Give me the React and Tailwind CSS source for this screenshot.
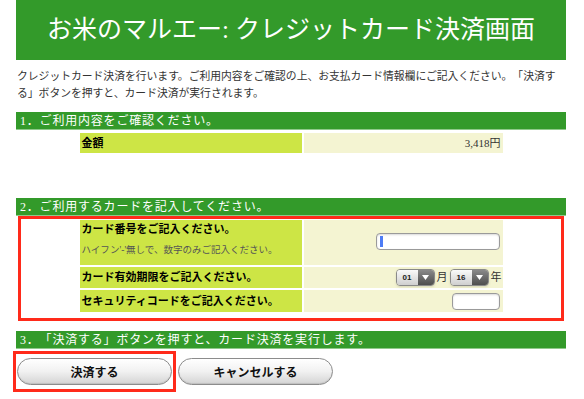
import React from 'react';

const serif = { fontFamily: '"Liberation Serif", "Noto Sans CJK JP", serif' };

const SectionBar = ({ children }) => (
  <div className="h-[18px] bg-[#339a2a] px-[4px] text-[12px] leading-[18px] text-white tracking-[0.8px] border-b border-[#8fc98a] [text-spacing-trim:space-all]">
    {children}
  </div>
);

const Select = ({ value }) => (
  <div className="flex h-[17px] items-stretch overflow-hidden rounded-[4px] border border-[#8a8a8a] shadow-sm">
    <div className="flex w-[21px] items-center justify-center bg-gradient-to-b from-[#fafafa] to-[#cfcfcf] text-[8px] font-bold text-[#222]" style={{ fontFamily: '"Liberation Sans", sans-serif' }}>
      {value}
    </div>
    <div className="flex w-[16px] items-center justify-center bg-gradient-to-b from-[#8a8a8a] to-[#4e4e4e]">
      <svg width="7" height="5" viewBox="0 0 7 5"><path d="M0 0h7L3.5 5z" fill="#fff" /></svg>
    </div>
  </div>
);

const Button = ({ children }) => (
  <button className="h-[27px] w-[155px] rounded-full border border-[#8c8c8c] bg-gradient-to-b from-white via-[#f1f1f1] to-[#d4d4d4] text-[12px] font-bold text-[#111] shadow-[inset_0_-1px_1px_rgba(0,0,0,0.1)]" style={{ fontFamily: '"Noto Sans CJK JP", sans-serif' }}>
    {children}
  </button>
);

export default function App() {
  return (
    <div className="h-[399px] w-[584px] overflow-hidden bg-white text-[#222]" style={serif}>
      <div className="mx-[16px] w-[550px]">
        <div className="flex h-[60px] items-center justify-center bg-[#339a2a] text-[25px] text-white">
          お米のマルエー: クレジットカード決済画面
        </div>

        <p className="mt-[8px] pl-[1px] text-[10.8px] leading-[17px] text-[#333] [text-spacing-trim:space-all]">
          クレジットカード決済を行います。ご利用内容をご確認の上、お支払カード情報欄にご記入ください。「決済する」ボタンを押すと、カード決済が実行されます。
        </p>

        <div className="mt-[10px]">
          <SectionBar>1．ご利用内容をご確認ください。</SectionBar>
          <div className="mx-auto mt-[3px] flex w-[423px] gap-[2px] text-[11px]">
            <div className="flex h-[20px] w-[222px] items-center bg-[#cde545] px-[2px] font-bold text-black">金額</div>
            <div className="flex h-[20px] flex-1 items-center justify-end bg-[#f4f4d2] px-[2px] text-[#333]">3,418円</div>
          </div>
        </div>

        <div className="mt-[45px]">
          <SectionBar>2．ご利用するカードを記入してください。</SectionBar>
          <div className="mx-[2px] border-[3px] border-[#ff2a1a] pb-[6px] pt-[1px]">
            <div className="mx-auto flex w-[423px] flex-col gap-[2px] text-[11px]">
              <div className="flex gap-[2px]">
                <div className="flex h-[45px] w-[222px] flex-col bg-[#cde545] px-[2px] pt-[1px]">
                  <div className="font-bold leading-[16px] text-black">カード番号をご記入ください。</div>
                  <div className="mt-[6px] text-[9.5px] leading-[14px] text-[#555]">ハイフン'-'無しで、数字のみご記入ください。</div>
                </div>
                <div className="flex flex-1 items-start justify-end bg-[#f4f4d2] px-[3px] pt-[13px]">
                  <div className="flex h-[17px] w-[124px] items-center rounded-[4px] border border-[#9a9a9a] bg-white pl-[3px] shadow-[inset_0_1px_2px_rgba(0,0,0,0.15)]">
                    <div className="h-[11px] w-[3px] bg-[#4d7cf5]" />
                  </div>
                </div>
              </div>
              <div className="flex gap-[2px]">
                <div className="flex h-[21px] w-[222px] items-center bg-[#cde545] px-[2px] font-bold text-black">カード有効期限をご記入ください。</div>
                <div className="flex flex-1 items-center justify-end gap-[2px] bg-[#f4f4d2] pr-[1px]">
                  <Select value="01" />
                  <span className="text-[11px] text-[#333]">月</span>
                  <Select value="16" />
                  <span className="text-[11px] text-[#333]">年</span>
                </div>
              </div>
              <div className="flex gap-[2px]">
                <div className="flex h-[22px] w-[222px] items-center bg-[#cde545] px-[2px] font-bold text-black">セキュリティコードをご記入ください。</div>
                <div className="flex flex-1 items-center justify-end bg-[#f4f4d2] px-[3px]">
                  <div className="h-[17px] w-[48px] rounded-[4px] border border-[#9a9a9a] bg-white shadow-[inset_0_1px_2px_rgba(0,0,0,0.15)]" />
                </div>
              </div>
            </div>
          </div>
        </div>

        <div className="mt-[10px]">
          <SectionBar>3．「決済する」ボタンを押すと、カード決済を実行します。</SectionBar>
          <div className="mt-[2px] flex items-center gap-[2px]">
            <div className="-ml-[3px] border-[3px] border-[#ff2a1a] px-[1px] py-[4px]">
              <Button>決済する</Button>
            </div>
            <Button>キャンセルする</Button>
          </div>
        </div>
      </div>
    </div>
  );
}
